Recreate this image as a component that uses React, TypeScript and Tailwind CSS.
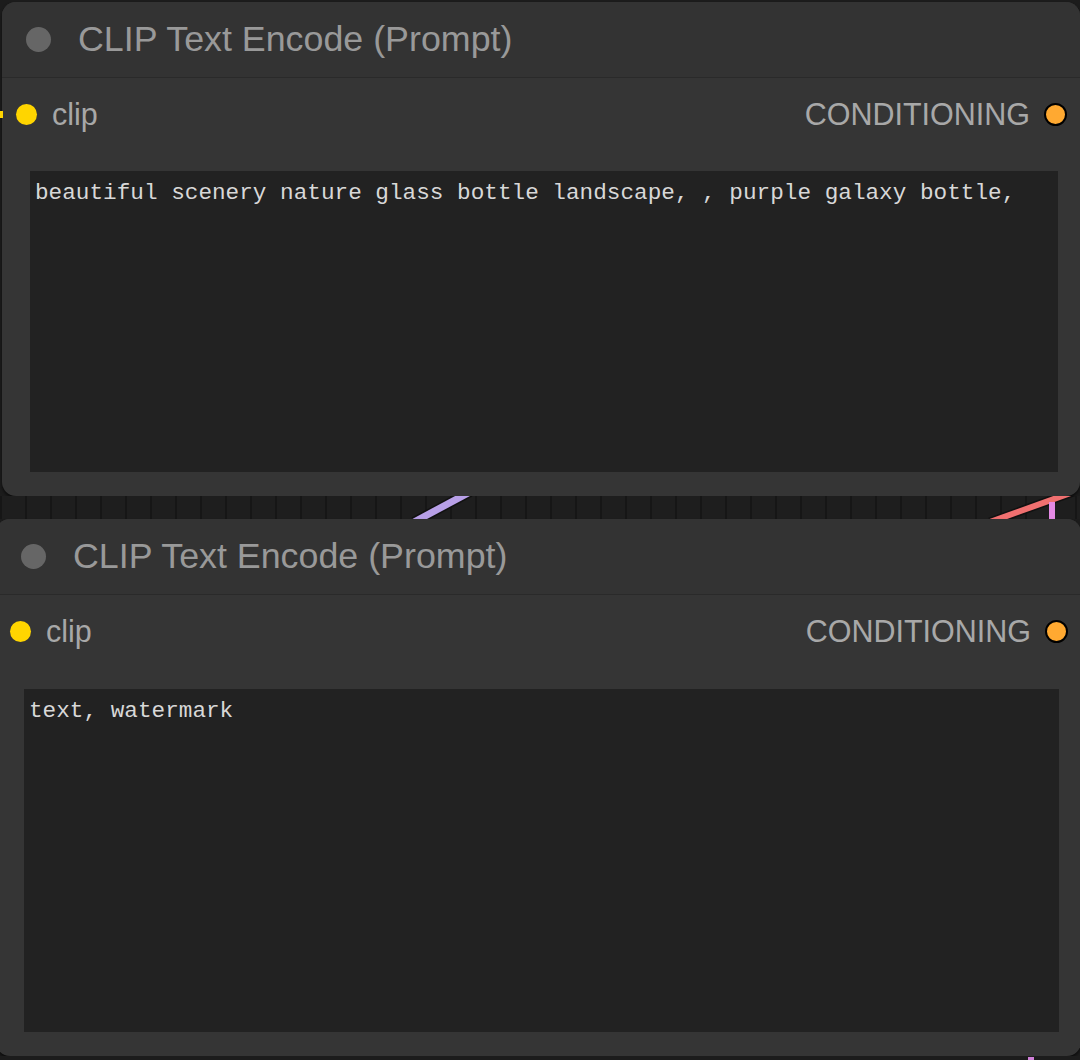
import React from 'react';

const sans = { fontFamily: '"Liberation Sans", Arial, sans-serif' };
const mono = { fontFamily: '"Liberation Mono", "Courier New", monospace' };

interface NodeProps {
  prompt: string;
  boxHeight: string;
  boxTop: string;
  outer: string;
  pad: string;
}

const ClipNode = ({ prompt, boxHeight, boxTop, outer, pad }: NodeProps) => {
  return (
    <div className={`relative shrink-0 flex flex-col bg-[#353535] rounded-[14px] shadow-[0_2px_3px_rgba(0,0,0,0.6)] overflow-hidden ${outer}`}>
      {/* title bar */}
      <div className={`flex items-center h-[76px] bg-[#333333] border-b border-[#2a2a2a] ${pad}`}>
        <div className="w-[25px] h-[25px] rounded-full bg-[#666666]" />
        <span className="ml-[27px] text-[35.8px] leading-none text-[#999999]" style={sans}>
          CLIP Text Encode (Prompt)
        </span>
      </div>

      {/* slots */}
      <div className="flex items-center justify-between h-[72px] pl-[14px] pr-[13px]">
        <div className="flex items-center">
          <div className="w-[21px] h-[21px] rounded-full bg-[#ffd500]" />
          <span className="ml-[15px] text-[30.5px] leading-none text-[#a8a8a8]" style={sans}>clip</span>
        </div>
        <div className="flex items-center">
          <span className="mr-[14px] text-[30.5px] leading-none text-[#a8a8a8]" style={sans}>CONDITIONING</span>
          <div className="w-[23px] h-[23px] rounded-full bg-[#ffa931] border-2 border-black" />
        </div>
      </div>

      {/* prompt box */}
      <div className={`ml-[28px] mr-[22px] bg-[#222222] pl-[5px] pt-[9px] ${boxTop} ${boxHeight}`}>
        <p className="text-[22.7px] leading-[26px] text-[#d8d8d8] whitespace-pre" style={mono}>
          {prompt}
        </p>
      </div>
    </div>
  );
};

export default function App() {
  return (
    <div className="relative w-[1080px] h-[1060px] overflow-hidden bg-[#1c1c1c] flex flex-col">
      {/* clip input wire peeking on the left */}
      <div className="absolute left-0 top-[111px] w-[3px] h-[7px] bg-[#ffd500] z-10" />

      <div className="pt-[2px] pl-[2px]">
        <ClipNode
          prompt="beautiful scenery nature glass bottle landscape, , purple galaxy bottle,"
          boxHeight="h-[301px]"
          boxTop="mt-[21px]"
          outer="w-[1078px] h-[494px]"
          pad="pl-[24px]"
        />
      </div>

      {/* canvas strip between nodes */}
      <div className="relative h-[23px] shrink-0 bg-[#1e1e1e] bg-[linear-gradient(90deg,#161616_2px,transparent_2px)] bg-[length:25px_100%]">
        <svg className="absolute inset-0" width="1080" height="23" viewBox="0 0 1080 23">
          <line x1="414" y1="26" x2="470" y2="-4" stroke="#111" strokeWidth="10" />
          <line x1="414" y1="26" x2="470" y2="-4" stroke="#b8a0e8" strokeWidth="7" />
          <line x1="990" y1="26" x2="1090" y2="-10" stroke="#111" strokeWidth="9" />
          <line x1="990" y1="26" x2="1090" y2="-10" stroke="#f07070" strokeWidth="6" />
          <line x1="1052" y1="6" x2="1052" y2="25" stroke="#e58ae5" strokeWidth="6" />
        </svg>
      </div>

      <div className="-ml-[4px]">
        <ClipNode
          prompt="text, watermark"
          boxHeight="h-[343px]"
          boxTop="mt-[22px]"
          outer="w-[1085px] h-[537px]"
          pad="pl-[25px]"
        />
      </div>

      <div className="relative flex-1 bg-[#1c1c1c]">
        <div className="absolute left-[1028px] top-[1px] w-[6px] h-[6px] bg-[#d080d8]" />
      </div>
    </div>
  );
}
